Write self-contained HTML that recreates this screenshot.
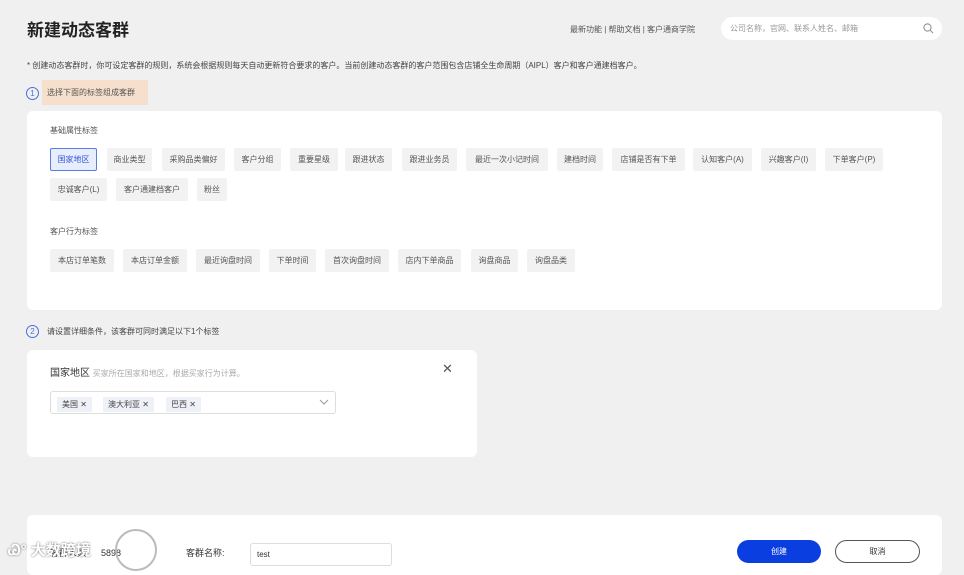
<!DOCTYPE html>
<html><head><meta charset="utf-8"><style>
*{margin:0;padding:0;box-sizing:border-box}
body{width:964px;height:568px;background:#f0f0f0;font-family:"Liberation Sans","Noto Sans CJK SC",sans-serif;position:relative;overflow:hidden;color:#333;white-space:nowrap}
.a{position:absolute}
.t{position:absolute;height:23px;line-height:23px;background:#f2f2f2;font-size:8px;color:#555;padding:0;border-radius:2px;text-align:center}
.sel{background:#e8edfd;border:1px solid #5a7be0;color:#3358d4;line-height:21px}
.card{position:absolute;background:#fff;border-radius:6px}
.chip{position:absolute;top:5px;height:15px;line-height:15px;background:#eef1f7;font-size:8px;color:#444;padding:0 5px}
.circ{position:absolute;width:13px;height:13px;border:1.2px solid #4a6ee0;border-radius:50%;font-size:8px;color:#4a6ee0;text-align:center;line-height:11px}
</style></head><body>
<div class="a" style="left:27px;top:16px;font-size:17px;font-weight:bold;color:#222">新建动态客群</div>
<div class="a" style="left:570px;top:24px;font-size:8px;color:#555">最新功能 | 帮助文档 | 客户通商学院</div>
<div class="a" style="left:721px;top:17px;width:221px;height:23px;background:#fff;border-radius:12px;font-size:8px;color:#999;line-height:23px;padding-left:9px">公司名称，官网、联系人姓名、邮箱
<svg class="a" style="right:8px;top:6px" width="11" height="11" viewBox="0 0 11 11"><circle cx="4.5" cy="4.5" r="3.6" fill="none" stroke="#888" stroke-width="1"/><path d="M7.2 7.2L10 10" stroke="#888" stroke-width="1"/></svg></div>
<div class="a" style="left:27px;top:60px;font-size:8px;color:#444">* 创建动态客群时，你可设定客群的规则，系统会根据规则每天自动更新符合要求的客户。当前创建动态客群的客户范围包含店铺全生命周期（AIPL）客户和客户通建档客户。</div>
<div class="circ" style="left:26px;top:87px">1</div>
<div class="a" style="left:42px;top:80px;width:106px;height:25px;background:#f6dfcc;font-size:8px;color:#555;line-height:25px;padding-left:5px">选择下面的标签组成客群</div>
<div class="card" style="left:27px;top:111px;width:915px;height:199px"></div>
<div class="a" style="left:50px;top:125px;font-size:8px;color:#555">基础属性标签</div>
<div class="t sel" style="left:50px;top:148px;width:47px">国家地区</div>
<div class="t" style="left:107px;top:148px;width:45px">商业类型</div>
<div class="t" style="left:162px;top:148px;width:63px">采购品类偏好</div>
<div class="t" style="left:234px;top:148px;width:47px">客户分组</div>
<div class="t" style="left:290px;top:148px;width:48px">重要星级</div>
<div class="t" style="left:345px;top:148px;width:47px">跟进状态</div>
<div class="t" style="left:402px;top:148px;width:55px">跟进业务员</div>
<div class="t" style="left:466px;top:148px;width:82px">最近一次小记时间</div>
<div class="t" style="left:557px;top:148px;width:46px">建档时间</div>
<div class="t" style="left:612px;top:148px;width:73px">店铺是否有下单</div>
<div class="t" style="left:693px;top:148px;width:59px">认知客户(A)</div>
<div class="t" style="left:761px;top:148px;width:55px">兴趣客户(I)</div>
<div class="t" style="left:825px;top:148px;width:58px">下单客户(P)</div>
<div class="t" style="left:50px;top:178px;width:57px">忠诚客户(L)</div>
<div class="t" style="left:116px;top:178px;width:72px">客户通建档客户</div>
<div class="t" style="left:197px;top:178px;width:30px">粉丝</div>
<div class="a" style="left:50px;top:226px;font-size:8px;color:#555">客户行为标签</div>
<div class="t" style="left:50px;top:249px;width:64px">本店订单笔数</div>
<div class="t" style="left:123px;top:249px;width:64px">本店订单金额</div>
<div class="t" style="left:196px;top:249px;width:64px">最近询盘时间</div>
<div class="t" style="left:269px;top:249px;width:47px">下单时间</div>
<div class="t" style="left:325px;top:249px;width:64px">首次询盘时间</div>
<div class="t" style="left:398px;top:249px;width:63px">店内下单商品</div>
<div class="t" style="left:471px;top:249px;width:47px">询盘商品</div>
<div class="t" style="left:527px;top:249px;width:48px">询盘品类</div>
<div class="circ" style="left:26px;top:325px">2</div>
<div class="a" style="left:47px;top:326px;font-size:8px;color:#444">请设置详细条件，该客群可同时满足以下1个标签</div>
<div class="card" style="left:27px;top:350px;width:450px;height:107px"></div>
<div class="a" style="left:50px;top:364px;font-size:10px;color:#333">国家地区 <span style="font-size:8px;color:#aaa">买家所在国家和地区，根据买家行为计算。</span></div>
<div class="a" style="left:442px;top:361px;font-size:13px;color:#555">✕</div>
<div class="a" style="left:50px;top:391px;width:286px;height:23px;border:1px solid #ddd;border-radius:3px;background:#fff">
<div class="chip" style="left:6px">美国 ✕</div><div class="chip" style="left:52px">澳大利亚 ✕</div><div class="chip" style="left:115px">巴西 ✕</div>
<svg class="a" style="right:6px;top:7px" width="10" height="7"><path d="M1 1L5 5L9 1" fill="none" stroke="#999"/></svg></div>
<div class="card" style="left:27px;top:515px;width:915px;height:60px"></div>
<div class="a" style="left:50px;top:546px;font-size:9px;color:#333">客群人数: <span style="margin-left:10px">5898</span></div>
<div class="a" style="left:8px;top:539px;font-size:15px;color:#fff;text-shadow:0 0 2px #666;font-weight:bold">Ꮚ° 大数跨境</div>
<div class="a" style="left:115px;top:529px;width:42px;height:42px;border:2px solid #bbb;border-radius:50%"></div>
<div class="a" style="left:186px;top:546px;font-size:9px;color:#333">客群名称:</div>
<div class="a" style="left:250px;top:543px;width:142px;height:23px;border:1px solid #ddd;border-radius:3px;font-size:8px;line-height:21px;padding-left:6px">test</div>
<div class="a" style="left:737px;top:540px;width:84px;height:23px;background:#0b3ee0;border-radius:12px;color:#fff;font-size:8px;text-align:center;line-height:23px">创建</div>
<div class="a" style="left:835px;top:540px;width:85px;height:23px;border:1px solid #555;border-radius:12px;color:#333;font-size:8px;text-align:center;line-height:21px">取消</div>
</body></html>
